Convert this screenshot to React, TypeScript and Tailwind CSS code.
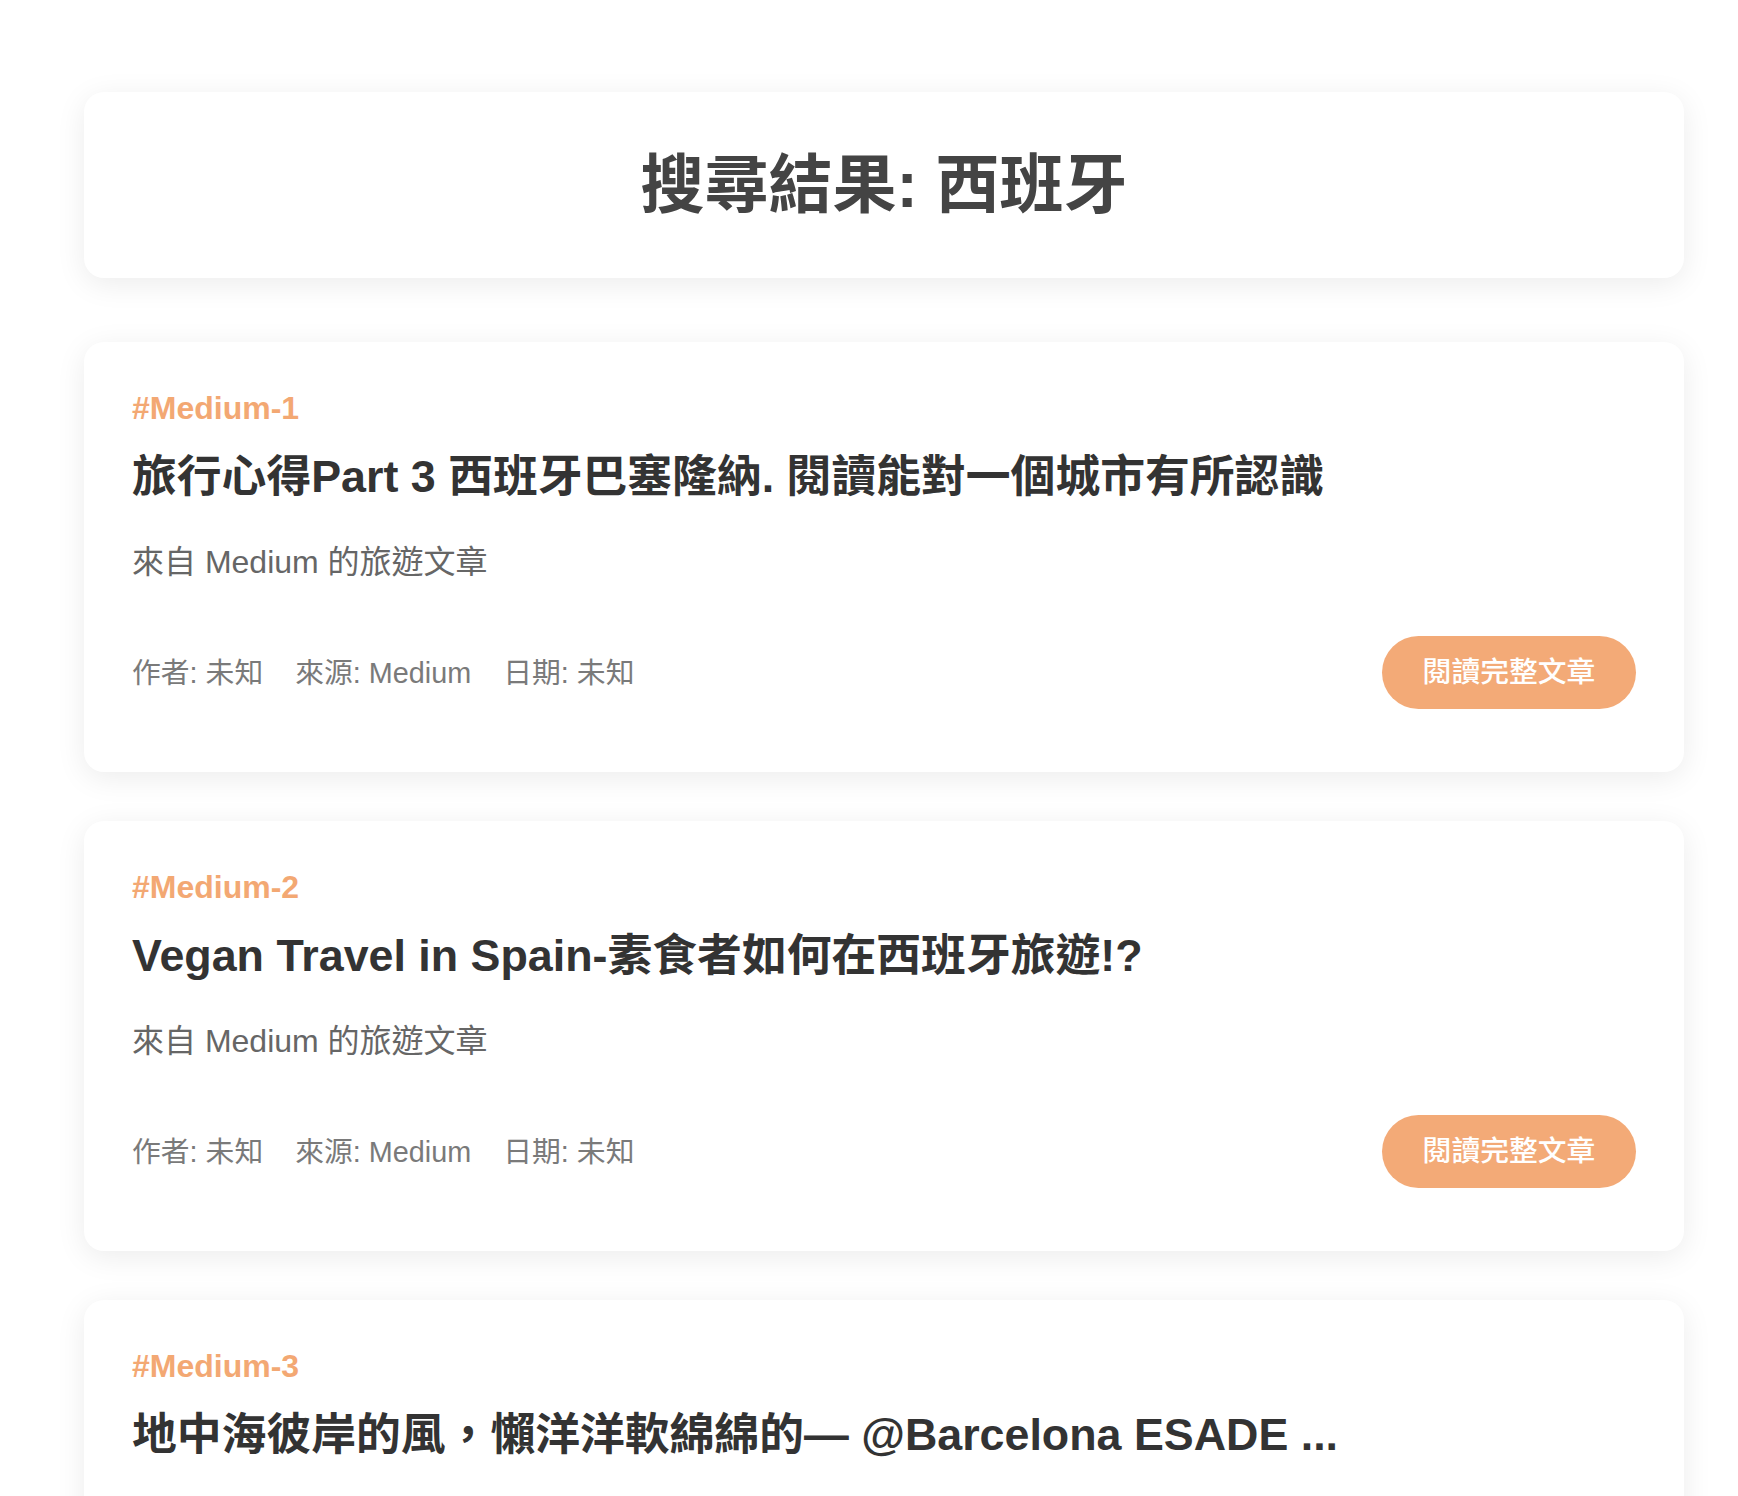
type Article = {
  tag: string;
  title: string;
  summary: string;
  author: string;
  source: string;
  date: string;
};

const articles: Article[] = [
  {
    tag: "#Medium-1",
    title: "旅行心得Part 3 西班牙巴塞隆納. 閱讀能對一個城市有所認識",
    summary: "來自 Medium 的旅遊文章",
    author: "未知",
    source: "Medium",
    date: "未知",
  },
  {
    tag: "#Medium-2",
    title: "Vegan Travel in Spain-素食者如何在西班牙旅遊!?",
    summary: "來自 Medium 的旅遊文章",
    author: "未知",
    source: "Medium",
    date: "未知",
  },
  {
    tag: "#Medium-3",
    title: "地中海彼岸的風，懶洋洋軟綿綿的— @Barcelona ESADE ...",
    summary: "來自 Medium 的旅遊文章",
    author: "未知",
    source: "Medium",
    date: "未知",
  },
];

export default function App() {
  return (
    <div className="h-screen overflow-hidden bg-white font-['Liberation_Sans','Noto_Sans_CJK_TC',sans-serif]">
      <div className="ml-[84px] w-[1600px] pt-[92px] flex flex-col">
        {/* Header */}
        <div className="h-[186px] bg-white rounded-[20px] shadow-[0_6px_30px_rgba(0,0,0,0.08)] flex items-center justify-center">
          <h1 className="text-[64px] leading-[76px] font-bold text-[#444]">
            搜尋結果: 西班牙
          </h1>
        </div>

        {/* Results */}
        <div className="mt-[64px] flex flex-col gap-[49px]">
          {articles.map((a) => (
            <ArticleCard key={a.tag} article={a} />
          ))}
        </div>
      </div>
    </div>
  );
}

function ArticleCard({ article }: { article: Article }) {
  return (
    <div className="bg-white rounded-[20px] shadow-[0_6px_30px_rgba(0,0,0,0.08)] px-[48px] pt-[48px] pb-[63px] flex flex-col">
      <p className="text-[32px] leading-[36px] font-bold text-[#f3a873]">
        {article.tag}
      </p>
      <h2 className="mt-[22px] text-[44.8px] leading-[56px] font-bold text-[#333]">
        {article.title}
      </h2>
      <p className="mt-[36px] text-[32px] leading-[44px] text-[#666]">
        {article.summary}
      </p>
      <div className="mt-[52px] flex items-center justify-between">
        <div className="flex gap-[32px] text-[28.8px] leading-[36px] text-[#7a7a7a]">
          <span>作者: {article.author}</span>
          <span>來源: {article.source}</span>
          <span>日期: {article.date}</span>
        </div>
        <button className="h-[73px] w-[254px] rounded-full bg-[#f3aa77] text-white text-[28.8px] font-medium flex items-center justify-center">
          閱讀完整文章
        </button>
      </div>
    </div>
  );
}
